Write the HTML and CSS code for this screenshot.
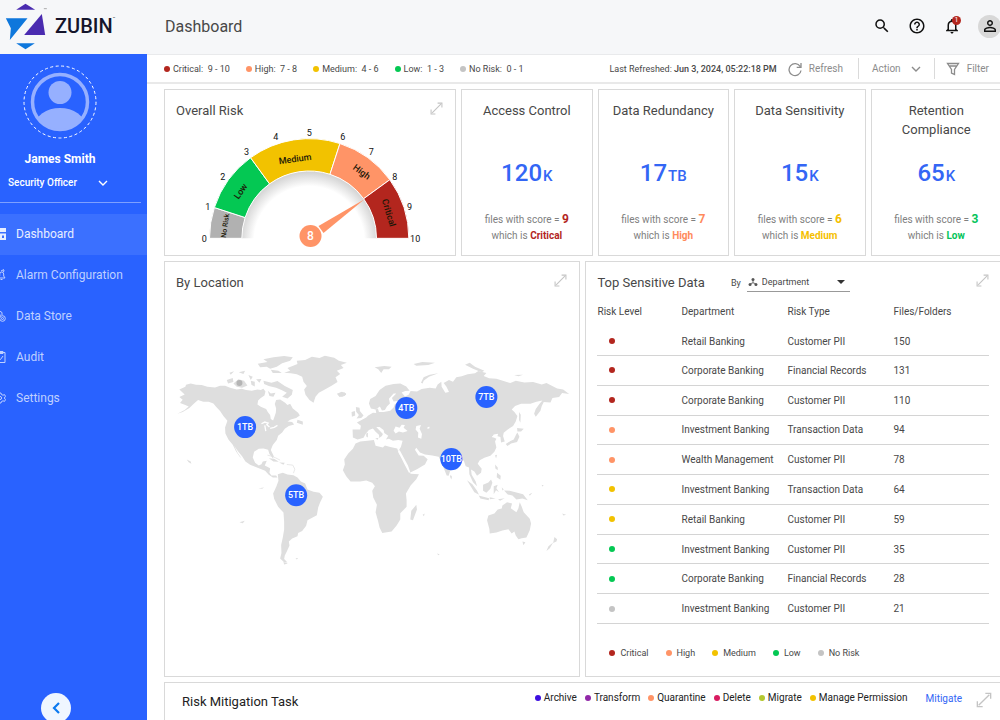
FILE: index.html
```html
<!DOCTYPE html>
<html lang="en">
<head>
<meta charset="utf-8">
<title>Zubin Dashboard</title>
<link rel="stylesheet" href="styles.css">
</head>
<body>
<svg class="defs" aria-hidden="true">
  <symbol id="expand" viewBox="0 0 12 12"><path d="M2 10L10 2M7 1h4v4M1 7v4h4" fill="none" stroke="currentColor" stroke-width="1"/></symbol>
  <symbol id="chevron" viewBox="0 0 12 8"><path d="M2 2l4 4 4-4" fill="none" stroke="currentColor" stroke-width="1.4"/></symbol>
</svg>
<div class="page">
  <header class="header">
    <div class="brand">
      <svg class="logo" viewBox="15 0 125 150" aria-hidden="true">
        <path d="M48 26L76 8l29 18z" fill="#4a2bb0"/>
        <path d="M17 52h65L29 117l3-35z" fill="#0e77dc"/>
        <path d="M125 39l10 63H72z" fill="#4a2bb0"/>
        <path d="M48 127h56l-28 18z" fill="#0e77dc"/>
        <path d="M131 23h9" stroke="#888" stroke-width="2"/>
      </svg>
      <span class="wordmark">ZUBIN</span><sup class="tm">™</sup>
    </div>
    <h1 class="page-title">Dashboard</h1>
    <div class="header-tools">
      <button class="icon-button" aria-label="Search"><svg class="icon-header" viewBox="0 0 24 24"><path d="M15.500 14h-.79l-.28-.27A6.471 6.471 0 0 0 16 9.500 6.500 6.500 0 1 0 9.500 16c1.610 0 3.090-.59 4.230-1.570l.27.28v.79l5 4.990L20.490 19l-4.990-5zm-6 0C7.010 14 5 11.990 5 9.500S7.010 5 9.500 5 14 7.010 14 9.500 11.990 14 9.500 14z"/></svg></button>
      <button class="icon-button" aria-label="Help"><svg class="icon-header" viewBox="0 0 24 24"><path d="M11 18h2v-2h-2v2zm1-16C6.480 2 2 6.480 2 12s4.480 10 10 10 10-4.480 10-10S17.520 2 12 2zm0 18c-4.410 0-8-3.590-8-8s3.590-8 8-8 8 3.590 8 8-3.590 8-8 8zm0-14c-2.210 0-4 1.790-4 4h2c0-1.100.9-2 2-2s2 .9 2 2c0 2-3 1.750-3 5h2c0-2.250 3-2.500 3-5 0-2.210-1.790-4-4-4z"/></svg></button>
      <button class="icon-button" aria-label="Notifications"><svg class="icon-header" viewBox="0 0 24 24"><path d="M12 22c1.100 0 2-.9 2-2h-4c0 1.100.9 2 2 2zm6-6v-5c0-3.070-1.630-5.640-4.500-6.320V4c0-.83-.67-1.500-1.500-1.500s-1.500.67-1.500 1.500v.68C7.640 5.360 6 7.920 6 11v5l-2 2v1h16v-1l-2-2zm-2 1H8v-6c0-2.480 1.510-4.500 4-4.500s4 2.020 4 4.500v6z"/></svg><span class="badge">1</span></button>
      <button class="icon-button account" aria-label="Account"><svg class="icon-header" viewBox="0 0 24 24"><path d="M12 5.900a2.100 2.100 0 1 1 0 4.200 2.100 2.100 0 0 1 0-4.200m0 9c2.970 0 6.100 1.460 6.100 2.100v1.100H5.900V17c0-.64 3.130-2.100 6.100-2.100M12 4C9.790 4 8 5.790 8 8s1.790 4 4 4 4-1.790 4-4-1.790-4-4-4zm0 9c-2.670 0-8 1.340-8 4v3h16v-3c0-2.660-5.330-4-8-4z"/></svg></button>
    </div>
  </header>

  <div class="body">
    <aside class="sidebar">
      <div class="profile">
        <svg class="avatar" viewBox="0 0 76 76" aria-hidden="true">
          <defs><clipPath id="face"><circle cx="38" cy="38" r="27"/></clipPath></defs>
          <circle cx="38" cy="38" r="36" fill="none" stroke="#fff" stroke-width="1" stroke-dasharray="3 2.500"/>
          <circle cx="38" cy="38" r="27.500" fill="none" stroke="#96b0ff" stroke-width="3.500"/>
          <circle cx="38" cy="28.500" r="11.500" fill="#96b0ff"/>
          <ellipse cx="38" cy="62" rx="25" ry="18" fill="#96b0ff" clip-path="url(#face)"/>
        </svg>
        <span class="user-name">James Smith</span>
      </div>
      <button class="role"><span>Security Officer</span><svg class="chevron" aria-hidden="true"><use href="#chevron"/></svg></button>
      <nav class="nav">
        <a class="nav-item active" href="#dashboard"><svg class="nav-icon bold" viewBox="0 0 12 12"><path d="M1 1h3v5H1zM7 1h4v2H7zM7 6.500h4V11H7zM1 9h3v2H1z"/></svg>Dashboard</a>
        <a class="nav-item" href="#alarms"><svg class="nav-icon" viewBox="0 0 12 12"><path d="M3 9h8l-1.300-2V5a2 2 0 0 0-4 0v2zM6.500 10.500h2M7 2l3-1.500M10 1l-.5 2"/></svg>Alarm Configuration</a>
        <a class="nav-item" href="#data"><svg class="nav-icon" viewBox="0 0 12 12"><circle cx="8.500" cy="8.500" r="2.800"/><circle cx="8.500" cy="8.500" r="1"/><path d="M2 1.500q4-1.500 6 1V5M2 5q3 1.500 5 0"/></svg>Data Store</a>
        <a class="nav-item" href="#audit"><svg class="nav-icon" viewBox="0 0 12 12"><path d="M1 1.500h10v10H1zM4 .5h5v2H4zM5 7l1.500 1.500L9 5"/></svg>Audit</a>
        <a class="nav-item" href="#settings"><svg class="nav-icon" viewBox="0 0 12 12"><circle cx="6" cy="6" r="1.600"/><path d="M5 1h2l.4 1.500 1.600.7 1.500-.6 1 1.700L10.300 6l1.200 1.700-1 1.700L9 8.800l-1.600.8L7 11H5"/></svg>Settings</a>
      </nav>
      <button class="collapse" aria-label="Collapse menu"><svg class="collapse-icon" viewBox="0 0 14 14"><path d="M10 2L5 7l5 5" fill="none" stroke="#0b79f0" stroke-width="2.200"/></svg></button>
    </aside>

    <main class="main">
      <div class="toolbar">
        <ul class="legend scale">
          <li><i class="dot critical"></i>Critical:&nbsp; 9 - 10</li>
          <li><i class="dot high"></i>High:&nbsp; 7 - 8</li>
          <li><i class="dot medium"></i>Medium:&nbsp; 4 - 6</li>
          <li><i class="dot low"></i>Low:&nbsp; 1 - 3</li>
          <li><i class="dot none"></i>No Risk:&nbsp; 0 - 1</li>
        </ul>
        <div class="refreshed">Last Refreshed: <b>Jun 3, 2024, 05:22:18 PM</b></div>
        <button class="tool refresh"><svg class="tool-icon" viewBox="0 0 16 16"><path d="M13.200 5.500A6 6 0 1 0 14 9.500M14 2v4.300H9.700" fill="none" stroke="currentColor" stroke-width="1.300"/></svg>Refresh</button>
        <button class="tool action">Action<svg class="chevron" aria-hidden="true"><use href="#chevron"/></svg></button>
        <button class="tool filter"><svg class="tool-icon" viewBox="0 0 16 16"><path d="M2.500 2.500h11L9.500 8.500v5l-3-1.500V8.500zM4 5h8" fill="none" stroke="currentColor" stroke-width="1.300"/></svg>Filter</button>
      </div>

      <div class="board">
        <div class="row summary">
          <section class="card gauge-card">
            <div class="card-head"><h2>Overall Risk</h2><button class="expand" aria-label="Expand"><svg class="expand-icon"><use href="#expand"/></svg></button></div>
            <svg class="gauge" viewBox="20 15 680 381" role="img" aria-label="Overall risk 8 of 10">
              <defs><radialGradient id="glow" gradientUnits="userSpaceOnUse" cx="356" cy="364" r="212"><stop offset=".78" stop-color="#fff"/><stop offset="1" stop-color="#cfcfcf"/></radialGradient></defs>
              <path d="M154 355a202 202 0 0 1 404 0z" fill="url(#glow)"/>
              <g stroke="#fff" stroke-width="3">
                <path d="M57 355A299 299 0 0 1 71.600 262.600L163.900 292.600A202 202 0 0 0 154 355z" fill="#b1b1b1"/>
                <path d="M71.600 262.600A299 299 0 0 1 180.200 113.100L237.200 191.600A202 202 0 0 0 163.900 292.600z" fill="#04c853"/>
                <path d="M180.200 113.100A299 299 0 0 1 448.400 70.600L418.400 162.900A202 202 0 0 0 237.200 191.600z" fill="#f2c200"/>
                <path d="M448.400 70.600A299 299 0 0 1 597.900 179.200L519.400 236.200A202 202 0 0 0 418.400 162.900z" fill="#ff9467"/>
                <path d="M597.900 179.200A299 299 0 0 1 655 355H558A202 202 0 0 0 519.400 236.200z" fill="#b3261e"/>
              </g>
              <path d="M384 318L522 238L399 339z" fill="#ff9467"/>
              <circle cx="360" cy="348" r="33" fill="#ff9467"/>
              <text class="hub" x="360" y="361">8</text>
              <g class="ticks">
                <text x="41" y="365">0</text><text x="52" y="269">1</text><text x="97" y="180">2</text><text x="168" y="106">3</text><text x="256" y="60">4</text><text x="356" y="48">5</text><text x="457" y="60">6</text><text x="542" y="106">7</text><text x="613" y="180">8</text><text x="657" y="269">9</text><text x="674" y="365">10</text>
              </g>
              <g class="bands">
                <text class="band-small" transform="translate(111 318) rotate(-82)">No Risk</text>
                <text transform="translate(158 219) rotate(-55)">Low</text>
                <text transform="translate(315 126) rotate(-8)">Medium</text>
                <text transform="translate(508 163) rotate(36)">High</text>
                <text transform="translate(586 281) rotate(73)">Critical</text>
              </g>
            </svg>
          </section>
          <section class="card stat"><h2>Access Control</h2><p class="value">120<small>K</small></p><p class="note">files with score = <b class="t-critical">9</b><br>which is <strong class="t-critical">Critical</strong></p></section>
          <section class="card stat"><h2>Data Redundancy</h2><p class="value">17<small>TB</small></p><p class="note">files with score = <b class="t-high">7</b><br>which is <strong class="t-high">High</strong></p></section>
          <section class="card stat"><h2>Data Sensitivity</h2><p class="value">15<small>K</small></p><p class="note">files with score = <b class="t-medium">6</b><br>which is <strong class="t-medium">Medium</strong></p></section>
          <section class="card stat"><h2>Retention Compliance</h2><p class="value">65<small>K</small></p><p class="note">files with score = <b class="t-low">3</b><br>which is <strong class="t-low">Low</strong></p></section>
        </div>

        <div class="row details">
          <section class="card location">
            <div class="card-head"><h2>By Location</h2><button class="expand" aria-label="Expand"><svg class="expand-icon"><use href="#expand"/></svg></button></div>
            <svg class="map" viewBox="172 345 400 230" role="img" aria-label="Data volume by location">
              <g fill="#dedede" transform="translate(170 340) scale(.33333)">
                <path d="M28 148L46 140 48 134 62 130 78 134 95 135 112 140 135 142 150 137 165 137 180 143 200 148 215 146 228 150 245 152 262 148 272 150 280 146 286 154 283 166 272 174 264 181 262 193 272 200 288 207 293 216 300 225 302 237 309 241 313 230 317 218 318 205 314 192 318 180 330 178 345 188 352 195 360 191 368 205 384 218 389 226 378 234 362 238 352 244 366 246 372 253 356 258 344 266 336 277 324 287 320 300 308 315 302 330 311 348 308 354 298 342 294 329 280 325 266 326 252 335 248 352 255 368 266 376 274 372 278 364 290 362 284 376 300 384 298 398 304 406 318 406 322 412 308 412 296 404 285 392 270 386 255 380 240 374 226 364 216 348 204 334 192 317 203 339 214 354 209 350 198 334 188 314 175 298 166 280 165 262 172 242 160 228 150 213 138 200 130 190 116 185 100 185 84 180 72 190 58 204 38 216 22 221 44 210 56 199 44 194 30 189 38 179 28 171 44 163z"/>
                <path d="M323 402L338 398 352 403 370 405 382 412 392 424 405 430 412 448 430 455 448 458 458 470 450 486 444 502 440 525 426 533 412 540 408 557 396 572 384 578 382 588 366 595 356 604 358 616 350 634 344 646 342 656 352 667 342 666 330 655 334 638 333 614 338 592 342 568 342 545 340 517 324 500 312 476 309 460 319 438 325 422z"/>
                <path d="M342 98L360 92 352 84 382 72 380 62 405 60 425 50 448 54 464 47 492 53 506 62 530 68 512 75 520 84 500 92 510 102 496 112 502 126 484 137 464 148 446 158 436 170 430 188 418 180 406 164 402 148 410 138 400 125 396 110 380 103 362 100z"/>
                <path d="M263 71L292 66 280 58 310 52 342 48 368 52 360 62 336 70 320 80 300 86 290 80 270 82zM302 89L325 92 335 99 308 99zM280 122L304 128 322 123 344 138 368 150 365 164 352 175 336 170 350 158 334 150 318 143 296 138 282 132zM170 120L188 114 190 126 174 130zM190 130L205 118 222 122 232 136 216 143 200 140zM206 97L225 92 220 102zM178 98L192 94 182 104zM235 105L248 110 242 120zM242 122L254 125 254 139 244 134zM258 118L274 117 268 128zM500 161L515 155 528 160 523 168 508 171zM293 152L302 160 316 158 310 170 298 168zM382 239L398 244 398 254 380 248zM296 354L312 356 326 365 310 364zM327 367L344 368 340 374zM50 358L62 364 64 371 56 366zM340 665L353 670 342 673zM376 654L384 653 380 658zM265 444L282 442 276 446zM446 665L458 667zM80 512L86 514zM106 524L118 527zM128 532L140 536zM208 546L224 542 218 549z"/>
                <path d="M292 345l12 3 12 5 14 7M350 373l18 2 6 12-4 12" fill="none" stroke="#dedede" stroke-width="2"/>
                <path d="M274 251l10-5 10 3-4 5 8 7M284 256l3 17M300 265l12-3 10-6" fill="none" stroke="#fff" stroke-width="4"/>
                <circle cx="208" cy="129" r="9" fill="#b5b5b5"/>
              </g>
              <g fill="#dedede" transform="translate(340 340) scale(.33333)">
                <path d="M37 268L60 268 62 257 50 247 64 240 78 232 84 226 98 218 108 219 106 208 113 205 116 216 130 216 150 212 160 202 164 192 174 190 190 184 172 183 160 184 155 174 168 160 160 160 146 176 149 190 140 199 134 210 125 211 119 199 106 208 92 205 86 190 90 177 106 168 118 150 136 137 160 132 180 130 198 139 208 152 195 153 184 157 194 169 205 164 211 153 230 154 244 147 268 143 286 145 292 133 303 125 304 140 315 158 326 156 318 139 310 129 326 120 338 125 348 112 364 109 382 103 404 100 414 93 438 99 430 108 446 115 468 116 492 124 510 129 526 122 552 127 578 126 604 133 618 129 650 145 668 148 686 162 665 159 656 171 636 174 630 187 610 186 604 198 600 212 586 230 581 221 586 207 598 190 606 181 588 185 570 191 542 191 524 198 514 208 522 216 531 228 526 244 518 258 502 268 490 278 488 288 493 304 482 307 480 291 470 288 472 281 460 283 456 290 468 296 464 304 468 322 462 335 450 347 432 353 418 360 412 371 424 386 422 398 410 407 402 394 392 388 394 404 406 424 410 438 398 426 387 402 386 382 376 378 370 360 354 370 338 386 329 393 325 407 319 406 311 386 304 368 295 350 276 346 254 343 239 337 228 323 224 329 235 346 250 347 262 357 254 373 230 387 210 397 203 386 195 370 184 350 175 332 182 320 187 302 174 300 158 302 146 296 137 298 144 287 132 279 130 270 118 261 108 261 128 282 125 288 117 294 116 284 106 275 98 265 86 270 76 282 70 293 52 298 38 292z"/>
                <path d="M46 310L60 304 82 302 101 300 106 317 128 322 134 316 150 321 171 325 175 339 189 362 200 383 211 401 236 402 228 417 211 436 197 460 199 480 199 500 180 519 180 538 169 556 154 574 126 578 118 562 113 541 106 516 110 494 99 472 96 452 104 438 96 428 78 421 60 424 31 424 18 408 8 390 14 373 12 358 24 340 38 326z"/>
                <path d="M440 540L444 526 462 520 472 508 484 505 486 496 500 486 515 490 511 504 528 516 534 504 538 486 544 500 550 516 568 536 572 550 568 570 558 592 544 594 534 597 526 586 522 574 514 580 504 567 486 571 468 577 448 580 447 566z"/>
                <path d="M228 494L230 508 218 540 210 538 213 512zM47 201L58 203 59 213 70 226 63 234 49 235 56 225 48 215zM34 216L44 213 45 226 35 230zM0 158L14 157 18 164 4 171zM103 82L132 78 154 80 146 88 130 88 123 99 114 88zM220 72l26-6 38 2-20 7-36 2zM242 128L250 112 268 104 294 100 266 110 250 122 247 130zM374 74L388 68 404 80 432 92 424 97 398 86zM521 105L548 104 534 109zM536 216L541 224 540 248 536 240zM530 264L550 266 542 274 531 274zM531 277L537 290 530 306 512 310 501 318 496 312 510 303 520 298 528 282zM464 345L470 344 467 355zM380 420L396 432 410 452 416 464 402 456zM428 434L444 427 452 418 456 428 450 446 438 458 428 452zM415 466L446 474 445 480 420 475zM460 438L472 434 468 444 476 456 467 450 460 462zM464 373L472 382 472 390 465 385zM470 398L481 407 480 419 469 411zM448 471l18 4-18 2zM473 477l20-3-14 8zM484 441L490 448 486 451zM491 451L508 452 528 457 548 462 562 480 546 475 528 478 516 466 502 463zM566 462l10-4-8 9zM546 604L555 606 549 615zM642 590L650 597 648 604 638 608zM638 607L628 624 618 632 624 618zM331 404L335 410 333 418 329 410zM78 280l5-2v14l-5-3zM105 295l10-2-3 6zM247 524l6-4-2 8zM580 468l8 6M592 477l8 8M610 520l6 6M665 520l12 4-8 2zM290 640l8 2-4 3zM604 434l6 2-5 3z"/>
                <path d="M160 272L166 259 178 263 184 254 194 255 190 263 202 273 188 277 176 274 166 280zM228 258L242 255 238 266 245 282 243 296 233 292 234 278 226 268zM262 261L268 260 267 265 261 266zM178 330l25 46 7 20-4 2-15-29-17-35z" fill="#fff"/>
                <path d="M455 290l13 0 4-8" stroke="#fff" stroke-width="3" fill="none"/>
              </g>
              <g class="pins">
                <circle cx="245" cy="427" r="11"/><text x="245" y="430">1TB</text>
                <circle cx="296" cy="495" r="11"/><text x="296" y="498">5TB</text>
                <circle cx="406" cy="408" r="11"/><text x="406" y="411">4TB</text>
                <circle cx="486" cy="397" r="11"/><text x="486" y="400">7TB</text>
                <circle cx="451" cy="459" r="11"/><text x="451" y="462">10TB</text>
              </g>
            </svg>
          </section>

          <section class="card sensitive">
            <div class="card-head">
              <h2>Top Sensitive Data</h2>
              <label class="by" for="group">By</label>
              <div class="select-box">
                <svg class="select-icon" viewBox="0 0 12 12" aria-hidden="true"><path d="M6 4v3M3 8l3-1 3 1" fill="none" stroke="#555"/><circle cx="6" cy="3" r="1.800"/><circle cx="2.500" cy="9" r="1.800"/><circle cx="9.500" cy="9" r="1.800"/></svg>
                <select id="group"><option>Department</option></select>
                <svg class="caret" viewBox="0 0 8 4" aria-hidden="true"><path d="M0 0h8L4 4z"/></svg>
              </div>
              <button class="expand" aria-label="Expand"><svg class="expand-icon"><use href="#expand"/></svg></button>
            </div>
            <table class="risks">
              <thead><tr><th>Risk Level</th><th>Department</th><th>Risk Type</th><th>Files/Folders</th></tr></thead>
              <tbody>
                <tr><td><i class="dot critical"></i></td><td>Retail Banking</td><td>Customer PII</td><td>150</td></tr>
                <tr><td><i class="dot critical"></i></td><td>Corporate Banking</td><td>Financial Records</td><td>131</td></tr>
                <tr><td><i class="dot critical"></i></td><td>Corporate Banking</td><td>Customer PII</td><td>110</td></tr>
                <tr><td><i class="dot high"></i></td><td>Investment Banking</td><td>Transaction Data</td><td>94</td></tr>
                <tr><td><i class="dot high"></i></td><td>Wealth Management</td><td>Customer PII</td><td>78</td></tr>
                <tr><td><i class="dot medium"></i></td><td>Investment Banking</td><td>Transaction Data</td><td>64</td></tr>
                <tr><td><i class="dot medium"></i></td><td>Retail Banking</td><td>Customer PII</td><td>59</td></tr>
                <tr><td><i class="dot low"></i></td><td>Investment Banking</td><td>Customer PII</td><td>35</td></tr>
                <tr><td><i class="dot low"></i></td><td>Corporate Banking</td><td>Financial Records</td><td>28</td></tr>
                <tr><td><i class="dot none"></i></td><td>Investment Banking</td><td>Customer PII</td><td>21</td></tr>
              </tbody>
            </table>
            <ul class="legend levels">
              <li><i class="dot critical"></i>Critical</li><li><i class="dot high"></i>High</li><li><i class="dot medium"></i>Medium</li><li><i class="dot low"></i>Low</li><li><i class="dot none"></i>No Risk</li>
            </ul>
          </section>
        </div>

        <section class="card tasks">
          <h2>Risk Mitigation Task</h2>
          <ul class="legend actions">
            <li><i class="dot archive"></i>Archive</li><li><i class="dot transform"></i>Transform</li><li><i class="dot high"></i>Quarantine</li><li><i class="dot delete"></i>Delete</li><li><i class="dot migrate"></i>Migrate</li><li><i class="dot medium"></i>Manage Permission</li>
          </ul>
          <a class="mitigate" href="#mitigate">Mitigate</a>
          <button class="expand" aria-label="Expand"><svg class="expand-icon large"><use href="#expand"/></svg></button>
        </section>
      </div>
    </main>
  </div>
</div>
</body>
</html>
```
FILE: styles.css
```css
* { box-sizing: border-box; }
body { margin: 0; font-family: Roboto, "Liberation Sans", sans-serif; color: #484848; background: #fff; }
h1, h2, p, ul { margin: 0; padding: 0; font-weight: 400; }
ul { list-style: none; }
button { border: 0; padding: 0; background: none; font: inherit; color: inherit; cursor: pointer; }
a { text-decoration: none; }
svg { display: block; flex: none; }
.defs { position: absolute; width: 0; height: 0; }

.page { height: 100vh; display: flex; flex-direction: column; overflow: hidden; }
.header { flex: none; height: 54px; display: flex; align-items: center; background: #f6f7f9; }
.brand { width: 165px; padding: 0 0 3px 5px; display: flex; align-items: center; color: #15152b; }
.logo { width: 42px; height: 50px; margin-right: 8px; }
.wordmark { font-size: 20px; font-weight: 500; }
.tm { font-size: 4px; margin-bottom: 14px; }
.page-title { font-size: 16px; margin-right: auto; margin-bottom: 2px; }
.header-tools { display: flex; align-items: center; gap: 12px; margin-right: -1px; color: #111; margin-bottom: 2px; }
.icon-button { position: relative; width: 23px; height: 23px; display: grid; place-items: center; }
.icon-header { width: 18px; height: 18px; fill: #111; }
.account { border-radius: 50%; background: #d8d8d8; margin-left: 3px; }
.badge { position: absolute; right: 2px; top: 1px; width: 9px; height: 9px; border-radius: 50%; background: #b3261e; color: #fff; font-size: 7px; line-height: 9px; }

.body { flex: 1; min-height: 0; display: flex; }
.sidebar { flex: none; width: 147px; background: #2962ff; color: #fff; display: flex; flex-direction: column; }
.profile { width: 120px; display: flex; flex-direction: column; align-items: center; padding-top: 10px; }
.avatar { width: 76px; height: 76px; }
.user-name { margin-top: 11px; font-size: 12px; line-height: 16px; font-weight: 700; }
.role { margin: 0 6px 0 0; padding: 8px 32px 11px 8px; display: flex; justify-content: space-between; align-items: center; font-size: 10px; line-height: 16px; font-weight: 500; border-bottom: 1px solid #7ea0ff; }
.chevron { width: 12px; height: 8px; }
.nav { margin-top: 11px; }
.nav-item { display: flex; align-items: center; gap: 10px; height: 41px; padding-bottom: 1px; color: #bfd0ff; font-size: 12px; }
.nav-item.active { background: #3b70ff; color: #e8eeff; }
.nav-icon { width: 12px; height: 12px; margin-left: -6px; fill: none; stroke: currentColor; stroke-width: 1; }
.nav-icon.bold { stroke-width: 2; }
.collapse { margin: auto 0 -3px 41px; width: 30px; height: 30px; flex: none; border-radius: 50%; background: #eff6ff; display: grid; place-items: center; }
.collapse-icon { width: 14px; height: 14px; }

.main { flex: 1; min-width: 0; overflow: hidden; }
.toolbar { height: 30px; padding: 0 11px 0 17px; display: flex; align-items: center; border-top: 1px solid #e9eaec; border-bottom: 2px solid #e9e9e9; font-size: 9px; }
.legend { display: flex; }
.legend li { display: flex; align-items: center; white-space: nowrap; }
.dot { width: 6px; height: 6px; border-radius: 50%; flex: none; display: block; }
.scale { gap: 16px; margin-right: auto; }
.scale .dot { margin-right: 3px; }
.refreshed { font-size: 9px; margin-right: 10px; }
.refreshed b { font-weight: 500; }
.tool { display: flex; align-items: center; height: 21px; color: #8c8c8c; font-size: 10px; }
.tool-icon { width: 16px; height: 16px; margin-right: 6px; }
.action { border-left: 1px solid #dadada; border-right: 1px solid #dadada; padding: 0 12px 0 13px; margin: 0 10px 0 15px; gap: 9px; }

.critical { background: #b3261e; }
.high { background: #ff9467; }
.medium { background: #f2c200; }
.low { background: #04c853; }
.none { background: #c4c4c4; }
.archive { background: #3d0fe0; }
.transform { background: #9128a8; }
.delete { background: #d81b60; }
.migrate { background: #b4c831; }
.t-critical { color: #b3261e; }
.t-high { color: #ff8a5c; }
.t-medium { color: #f5bf00; }
.t-low { color: #04c45a; }

.board { padding: 5px 0 0 17px; margin-right: -2px; display: flex; flex-direction: column; gap: 5px; }
.row { display: grid; gap: 5px; }
.summary { grid-template-columns: 291fr 131fr 131fr 131fr 131fr; min-height: 167px; }
.details { grid-template-columns: 416fr 416fr; min-height: 416px; }
.card { border: 1px solid #d9d9d9; background: #fff; min-width: 0; }
.card h2 { font-size: 13px; line-height: 19px; }
.card-head { display: flex; align-items: center; padding: 11px 12px 0 11px; }
.expand { margin-left: auto; color: #c4c4c4; }
.expand-icon { width: 13px; height: 13px; }
.expand-icon.large { width: 16px; height: 16px; }
.card-head .expand { margin-bottom: 4px; }
.gauge { width: 227px; height: 127px; margin: 5px auto 0; font-size: 27px; text-anchor: middle; }
.ticks { fill: #111; }
.bands { fill: #1c1708; font-weight: 500; }
.band-small { font-size: 21px; }
.hub { fill: #fff; font-size: 36px; font-weight: 500; }

.stat { text-align: center; padding: 11px 12px 0; }
.stat h2 { min-height: 38px; }
.value { margin-top: 19px; line-height: 30px; font-size: 24px; font-weight: 500; color: #3366f5; }
.value small { font-size: 15px; margin-left: 1px; }
.note { margin-top: 21px; font-size: 10px; line-height: 16px; color: #808080; }
.note b { font-size: 12px; line-height: 12px; }

.map { width: 100%; padding: 0 7px; margin-top: 53px; }
.pins { font-size: 9px; font-weight: 500; text-anchor: middle; fill: #fff; }
.pins circle { fill: #2962ff; }

.sensitive .card-head { padding: 11px 12px 8px 11px; }
.by { margin-left: 26px; font-size: 9px; }
.select-box { display: flex; align-items: center; width: 103px; height: 18px; margin-left: 6px; padding: 0 5px 0 1px; border-bottom: 1px solid #999; }
.select-icon { width: 10px; height: 10px; fill: #555; }
select { flex: 1; min-width: 0; appearance: none; border: 0; background: none; padding: 0 0 0 4px; font: 9px Roboto, sans-serif; color: #484848; }
.caret { width: 8px; height: 4px; fill: #333; }
.risks { table-layout: fixed; min-width: 392px; margin: 0 11px; height: 324px; border-collapse: collapse; font-size: 10px; text-align: left; }
.risks th { height: 27px; padding: 4px 0 0; font-weight: 400; line-height: 16px; vertical-align: top; white-space: nowrap; }
.risks td { padding: 0; border-bottom: 1px solid #d4d4d4; white-space: nowrap; }
.risks th:nth-child(1) { width: 84px; }
.risks th:nth-child(2), .risks th:nth-child(3) { width: 106px; }
.risks .dot { margin-left: 12px; }
.levels { gap: 17px; margin: 22px 23px 0; font-size: 9px; line-height: 14px; }
.levels .dot { margin-right: 5px; }

.tasks { display: flex; padding: 8px 9px 30px 17px; }
.tasks h2 { line-height: 22px; color: #222; }
.actions { gap: 8px; margin-left: auto; font-size: 10px; line-height: 14px; height: 14px; color: #222; }
.actions .dot { margin-right: 3px; }
.mitigate { margin-left: 18px; font-size: 10px; line-height: 16px; color: #3366f5; }
.tasks .expand { margin-left: 14px; height: 18px; }
```
